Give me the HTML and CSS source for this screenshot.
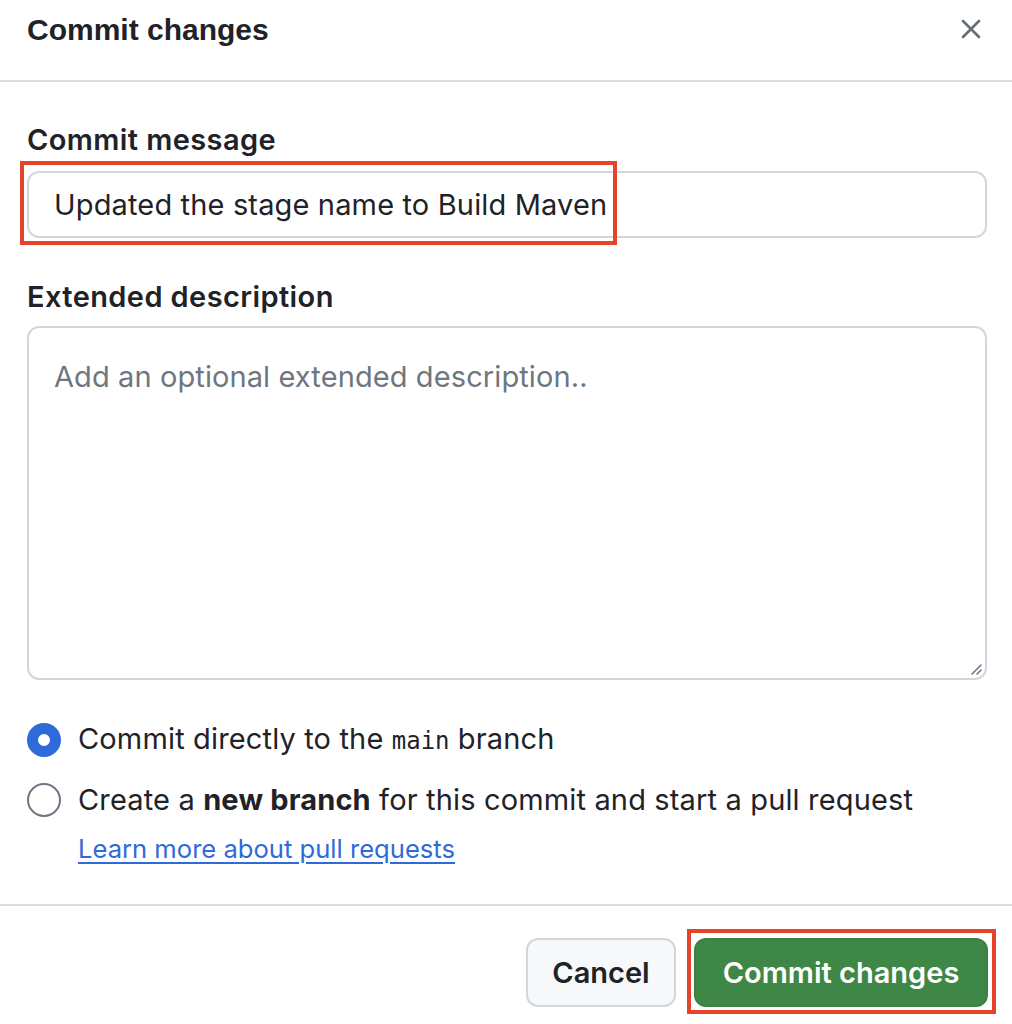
FILE: index.html
```html
<!DOCTYPE html>
<html lang="en">
<head>
<meta charset="utf-8">
<title>Commit changes</title>
<link rel="stylesheet" href="styles.css">
</head>
<body>
<div class="dialog">
  <header class="dialog-header">
    <h1 class="dialog-title">Commit changes</h1>
    <button class="close-btn" aria-label="Close">
      <svg width="20" height="20" viewBox="0 0 20 20"><path d="M2 2 L18 18 M18 2 L2 18" stroke="#656d76" stroke-width="2.6" stroke-linecap="round"/></svg>
    </button>
  </header>
  <div class="dialog-body">
    <label class="field-label">Commit message</label>
    <div class="input-wrap">
      <div class="text-input">Updated the stage name to Build Maven</div>
      <div class="annot annot-input"></div>
    </div>
    <label class="field-label desc-label">Extended description</label>
    <div class="textarea">
      <span class="placeholder">Add an optional extended description..</span>
      <svg class="grip" width="14" height="14" viewBox="0 0 14 14"><path d="M12 3 L3 12 M12 8 L8 12" stroke="#6e7781" stroke-width="1.6" stroke-linecap="round"/></svg>
    </div>
    <div class="radio-row first">
      <span class="radio checked"></span>
      <span class="radio-text">Commit directly to the <code>main</code> branch</span>
    </div>
    <div class="radio-row second">
      <span class="radio"></span>
      <span class="radio-text">Create a <b>new branch</b> for this commit and start a pull request</span>
    </div>
    <a class="learn-link" href="#">Learn more about pull requests</a>
  </div>
  <footer class="dialog-footer">
    <button class="btn btn-cancel">Cancel</button>
    <div class="primary-wrap">
      <button class="btn btn-primary">Commit changes</button>
      <div class="annot annot-btn"></div>
    </div>
  </footer>
</div>
</body>
</html>
```

FILE: styles.css
```css
* { box-sizing: border-box; }
html, body { margin: 0; padding: 0; background: #ffffff; }
body {
  font-family: "Inter", "Roboto", "Liberation Sans", sans-serif;
  color: #1f2328;
  width: 1012px;
  height: 1024px;
  overflow: hidden;
}
.dialog { display: flex; flex-direction: column; }
.dialog-header {
  height: 82px;
  display: flex;
  align-items: flex-start;
  justify-content: space-between;
  padding: 12px 30px 0 27px;
  border-bottom: 2px solid #d8dee4;
}
.dialog-title {
  margin: 0;
  font-family: "Liberation Sans", sans-serif;
  font-weight: 700;
  font-size: 30px;
  line-height: 36px;
  color: #1f2328;
}
.close-btn {
  border: 0;
  background: none;
  padding: 0;
  margin-top: 6px;
  width: 22px;
  height: 22px;
  display: flex;
  align-items: center;
  justify-content: center;
}
.dialog-body {
  padding: 40px 25px 0 27px;
  display: flex;
  flex-direction: column;
}
.field-label {
  display: block;
  font-weight: 600;
  font-size: 29px;
  letter-spacing: 0.4px;
  line-height: 36px;
  color: #1f2328;
}
.input-wrap { position: relative; margin-top: 13px; }
.text-input {
  height: 67px;
  border: 2px solid #d0d7de;
  border-radius: 12px;
  padding: 0 25px;
  display: flex;
  align-items: center;
  font-size: 29px;
  letter-spacing: 0.15px;
  color: #1f2328;
}
.annot {
  position: absolute;
  border: 4px solid #e5432a;
  pointer-events: none;
}
.annot-input { left: -7px; top: -10px; width: 597px; height: 84px; }
.desc-label { margin-top: 41px; }
.textarea {
  position: relative;
  margin-top: 11px;
  height: 354px;
  border: 2px solid #d0d7de;
  border-radius: 12px;
  padding: 31px 25px;
  font-size: 29px;
  letter-spacing: 0.1px;
}
.placeholder { color: #6e7781; line-height: 36px; }
.grip { position: absolute; right: 2px; bottom: 2px; }
.radio-row {
  display: flex;
  align-items: center;
  gap: 17px;
  height: 40px;
}
.radio-row.first { margin-top: 40px; }
.radio-row.second { margin-top: 20px; }
.radio {
  width: 34px;
  height: 34px;
  border-radius: 50%;
  border: 2px solid #6e7781;
  flex: none;
  background: #fff;
}
.radio.checked { border: 11px solid #2f6bd8; }
.radio-text { font-size: 29px; letter-spacing: 0.15px; color: #1f2328; line-height: 36px; }
.radio-text b { font-weight: 700; }
.radio-text code {
  font-family: "DejaVu Sans Mono", "Liberation Mono", monospace;
  font-size: 24px;
  letter-spacing: 0;
}
.learn-link {
  margin-left: 51px;
  margin-top: 13px;
  font-size: 25.6px;
  line-height: 32px;
  color: #2f6bd8;
  text-decoration: underline;
  text-underline-offset: 4px;
  align-self: flex-start;
}
.dialog-footer {
  margin-top: 39px;
  border-top: 2px solid #d8dee4;
  padding: 32px 24px 0 0;
  display: flex;
  justify-content: flex-end;
  gap: 18px;
}
.btn {
  height: 69px;
  border-radius: 12px;
  font-family: "Inter", "Roboto", sans-serif;
  font-size: 29px;
  font-weight: 600;
  padding: 0;
}
.btn-cancel {
  width: 150px;
  background: #f6f8fa;
  border: 2px solid #d0d7de;
  color: #1f2328;
}
.primary-wrap { position: relative; display: flex; }
.btn-primary {
  width: 294px;
  background: #3f8746;
  border: 2px solid #3c8044;
  color: #ffffff;
}
.annot-btn { left: -7px; top: -9px; width: 309px; height: 85px; }
```
